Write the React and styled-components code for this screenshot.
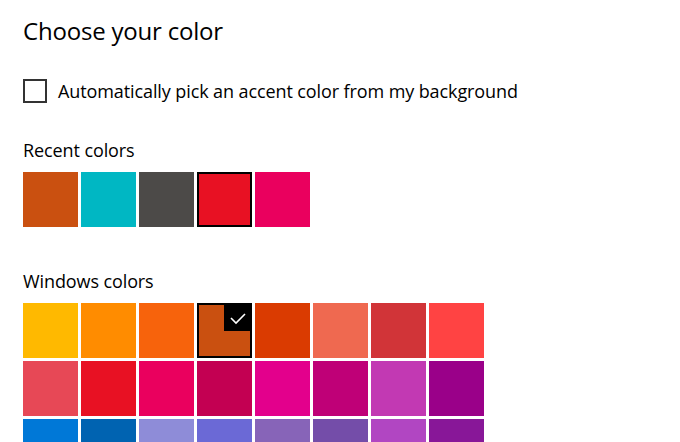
import React, {useState} from 'react';
import styled, {createGlobalStyle} from 'styled-components';

const GlobalStyle = createGlobalStyle`
html, body {
    margin: 0;
    padding: 0;
    background: #ffffff;
    overflow: hidden;
}
body {
    font-family: "Open Sans", "Noto Sans", sans-serif;
    color: #000000;
}
`;

const recentColors = ['#CA5010', '#00B7C3', '#4C4A48', '#E81123', '#EA005E'];

const windowsColors = [
    '#FFB900', '#FF8C00', '#F7630C', '#CA5010', '#DA3B01', '#EF6950', '#D13438', '#FF4343',
    '#E74856', '#E81123', '#EA005E', '#C30052', '#E3008C', '#BF0077', '#C239B3', '#9A0089',
    '#0078D7', '#0063B1', '#8E8CD8', '#6B69D6', '#8764B8', '#744DA9', '#B146C2', '#881798',
];

const Page = styled.div`
padding: 14px 23px 0 23px;
`;
const Title = styled.h1`
margin: 0;
font-size: 24px;
font-weight: 400;
line-height: 34px;
letter-spacing: -0.2px;
`;
const CheckRow = styled.label`
display: flex;
align-items: center;
gap: 11px;
margin-top: 31px;
cursor: pointer;
`;
const Box = styled.span`
width: 20px;
height: 20px;
border: 2px solid #333333;
flex-shrink: 0;
`;
const CheckText = styled.span`
font-size: 18px;
line-height: 24px;
letter-spacing: -0.1px;
`;
const SectionLabel = styled.h2`
margin: ${props => props.top}px 0 10px 0;
font-size: 18px;
font-weight: 400;
line-height: 24px;
letter-spacing: -0.1px;
`;
const SwatchRow = styled.div`
display: flex;
gap: 3px;
`;
const SwatchGrid = styled.div`
display: grid;
grid-template-columns: repeat(8, 55px);
grid-auto-rows: 55px;
gap: 3px;
`;
const Swatch = styled.button`
position: relative;
width: 55px;
height: 55px;
padding: 0;
border: ${props => props.selected ? '2px solid #000000' : 'none'};
background: ${props => props.color};
box-sizing: border-box;
cursor: pointer;
`;
const CheckBadge = styled.span`
position: absolute;
top: -1px;
right: -1px;
width: 27px;
height: 27px;
background: #000000;
display: flex;
align-items: center;
justify-content: center;
`;

const CheckMark = () => (
    <svg width="18" height="14" viewBox="0 0 18 14">
        <polyline points="2,7 7,12 16,3" fill="none" stroke="#ffffff" strokeWidth="1.6" />
    </svg>
);

const App = () => {
    const [accent, setAccent] = useState('#CA5010');

    return (
        <Page>
            <GlobalStyle />
            <Title>Choose your color</Title>
            <CheckRow>
                <Box />
                <CheckText>Automatically pick an accent color from my background</CheckText>
            </CheckRow>
            <SectionLabel top={35}>Recent colors</SectionLabel>
            <SwatchRow>
                {recentColors.map((c, i) => (
                    <Swatch key={c} color={c} selected={i === 3} onClick={() => setAccent(c)} />
                ))}
            </SwatchRow>
            <SectionLabel top={42}>Windows colors</SectionLabel>
            <SwatchGrid>
                {windowsColors.map((c, i) => (
                    <Swatch key={c + i} color={c} selected={accent === c && i === 3} onClick={() => setAccent(c)}>
                        {accent === c && i === 3 && <CheckBadge><CheckMark /></CheckBadge>}
                    </Swatch>
                ))}
            </SwatchGrid>
        </Page>
    );
};

export default App;
